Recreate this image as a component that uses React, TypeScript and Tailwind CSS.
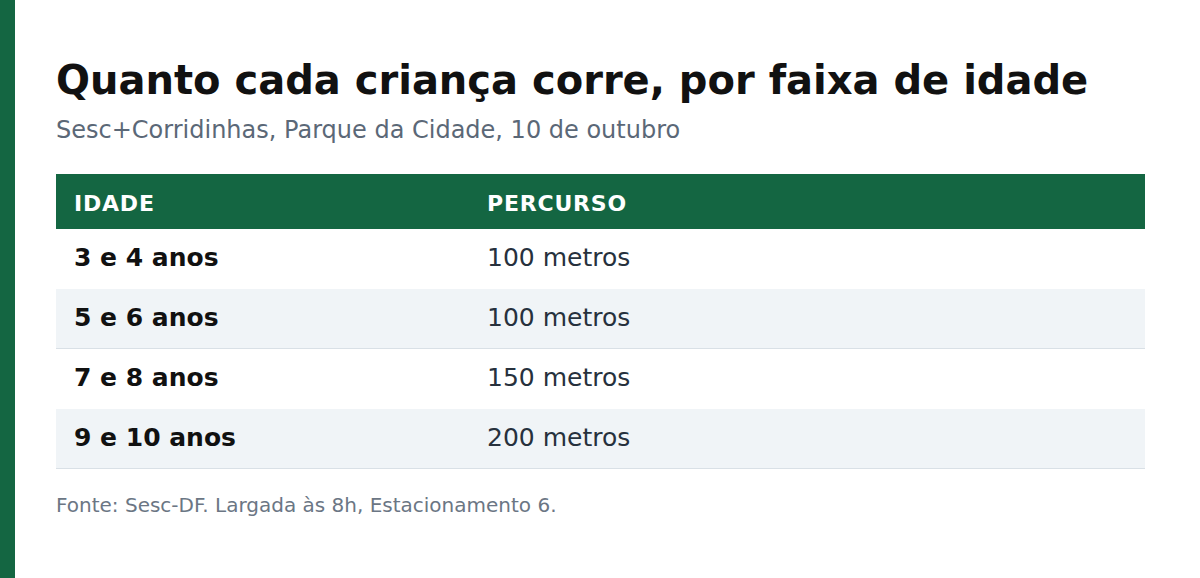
const rows = [
  { age: "3 e 4 anos", distance: "100 metros" },
  { age: "5 e 6 anos", distance: "100 metros" },
  { age: "7 e 8 anos", distance: "150 metros" },
  { age: "9 e 10 anos", distance: "200 metros" },
];

export default function App() {
  return (
    <div className="flex h-[578px] w-[1200px] bg-white font-['DejaVu_Sans',sans-serif]">
      <div className="w-[15px] shrink-0 bg-[#146642]" />
      <main className="flex-1 pl-[41px] pr-[55px] pt-[56px]">
        <h1 className="text-[40px] font-bold leading-[48px] text-[#111111]">
          Quanto cada criança corre, por faixa de idade
        </h1>
        <p className="mt-[11px] text-[24px] leading-[30px] text-[#5b6877]">
          Sesc+Corridinhas, Parque da Cidade, 10 de outubro
        </p>

        <div className="mt-[29px]">
          <div className="grid h-[55px] grid-cols-[431px_1fr] items-center bg-[#146642] pt-[4px] text-[22px] font-bold uppercase text-white">
            <div className="px-[18px] tracking-[0.8px]">Idade</div>
            <div className="tracking-[0.8px]">Percurso</div>
          </div>
          {rows.map((row, i) => (
            <div
              key={row.age}
              className={`grid grid-cols-[431px_1fr] items-center pb-[2px] text-[25px] ${
                i % 2 === 1 ? "h-[60px] border-b border-[#d9e0e6] bg-[#f0f4f7]" : "h-[60px]"
              }`}
            >
              <div className="px-[18px] font-bold text-[#111111]">{row.age}</div>
              <div className="text-[#27313d]">{row.distance}</div>
            </div>
          ))}
        </div>

        <p className="mt-[24px] text-[20px] leading-[24px] text-[#6b7684]">
          Fonte: Sesc-DF. Largada às 8h, Estacionamento 6.
        </p>
      </main>
    </div>
  );
}
